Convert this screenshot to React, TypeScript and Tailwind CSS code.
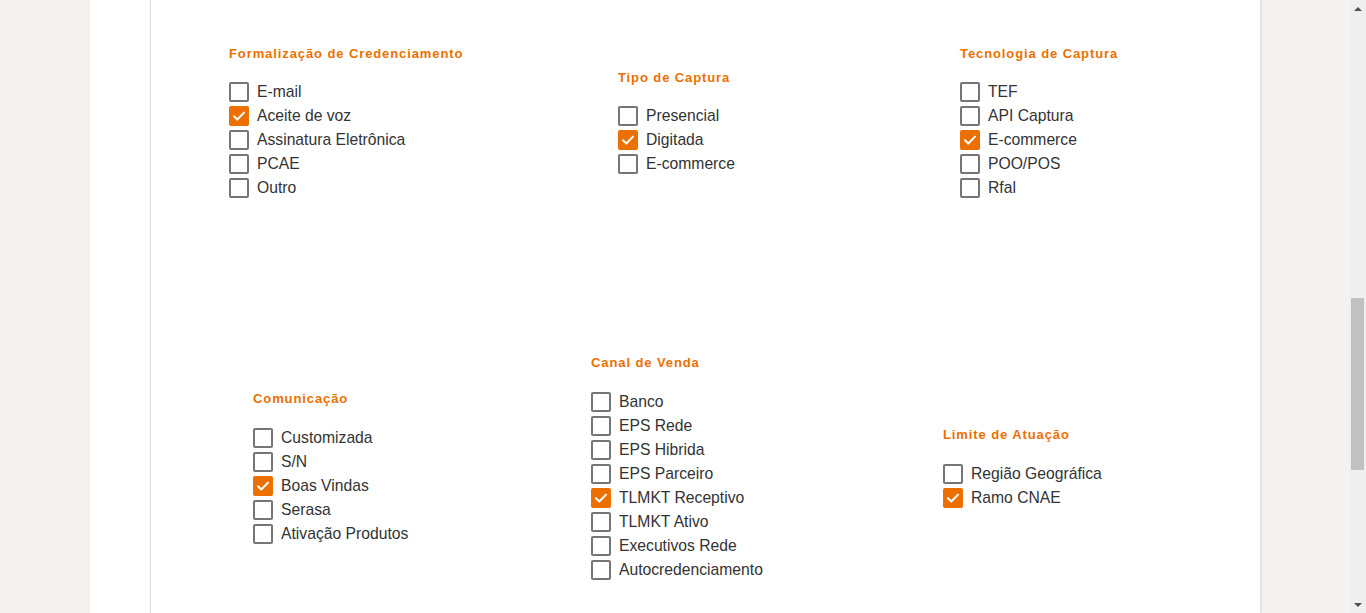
import React from 'react';

type Option = { label: string; checked?: boolean };

interface GroupProps {
  title: string;
  options: Option[];
  listClass?: string;
}

function Check({ checked }: { checked?: boolean }) {
  if (checked) {
    return (
      <span className="flex h-[20px] w-[20px] shrink-0 items-center justify-center rounded-[2px] bg-[#ec7000]">
        <svg width="14" height="14" viewBox="0 0 14 14" fill="none">
          <path d="M2 7.2l3.3 3.3L12 3.6" stroke="#fff" strokeWidth="2" strokeLinecap="round" strokeLinejoin="round" />
        </svg>
      </span>
    );
  }
  return <span className="h-[20px] w-[20px] shrink-0 rounded-[2px] border-2 border-[#767676] bg-white" />;
}

function CheckGroup({ title, options, listClass = 'mt-[18px]' }: GroupProps) {
  return (
    <div>
      <p className="text-[13px] font-bold leading-[16px] tracking-[0.9px] text-[#ec7000]">{title}</p>
      <ul className={listClass}>
        {options.map((opt) => (
          <li key={opt.label} className="flex h-[24px] items-center gap-[8px]">
            <Check checked={opt.checked} />
            <span className="text-[15.7px] leading-[24px] text-[#333]">{opt.label}</span>
          </li>
        ))}
      </ul>
    </div>
  );
}

const formalizacao: Option[] = [
  { label: 'E-mail' },
  { label: 'Aceite de voz', checked: true },
  { label: 'Assinatura Eletrônica' },
  { label: 'PCAE' },
  { label: 'Outro' },
];

const tipoCaptura: Option[] = [
  { label: 'Presencial' },
  { label: 'Digitada', checked: true },
  { label: 'E-commerce' },
];

const tecnologia: Option[] = [
  { label: 'TEF' },
  { label: 'API Captura' },
  { label: 'E-commerce', checked: true },
  { label: 'POO/POS' },
  { label: 'Rfal' },
];

const comunicacao: Option[] = [
  { label: 'Customizada' },
  { label: 'S/N' },
  { label: 'Boas Vindas', checked: true },
  { label: 'Serasa' },
  { label: 'Ativação Produtos' },
];

const canalVenda: Option[] = [
  { label: 'Banco' },
  { label: 'EPS Rede' },
  { label: 'EPS Hibrida' },
  { label: 'EPS Parceiro' },
  { label: 'TLMKT Receptivo', checked: true },
  { label: 'TLMKT Ativo' },
  { label: 'Executivos Rede' },
  { label: 'Autocredenciamento' },
];

const limite: Option[] = [
  { label: 'Região Geográfica' },
  { label: 'Ramo CNAE', checked: true },
];

export default function App() {
  return (
    <div className="flex h-[613px] w-full overflow-hidden bg-[#f5f2ef] font-['Liberation_Sans',Arial,sans-serif]">
      <div className="flex-1 pl-[90px] pr-[89px]">
        {/* painel branco */}
        <div className="h-full w-[1170px] bg-white pl-[60px] shadow-[1px_0_3px_rgba(0,0,0,0.12)]">
          <div className="h-full border-l border-[#dcdcdc] pt-[46px]">
            <div className="grid grid-cols-[389px_342px_1fr] items-center pl-[78px]">
              <CheckGroup title="Formalização de Credenciamento" options={formalizacao} />
              <CheckGroup title="Tipo de Captura" options={tipoCaptura} />
              <CheckGroup title="Tecnologia de Captura" options={tecnologia} />
            </div>
            <div className="mt-[155px] grid grid-cols-[338px_352px_1fr] items-center pl-[102px]">
              <CheckGroup title="Comunicação" options={comunicacao} listClass="mt-[19px]" />
              <CheckGroup title="Canal de Venda" options={canalVenda} listClass="mt-[19px]" />
              <CheckGroup title="Limite de Atuação" options={limite} listClass="mt-[19px]" />
            </div>
          </div>
        </div>
      </div>
      {/* barra de rolagem */}
      <div className="flex w-[17px] flex-col bg-[#efefef]">
        <div className="flex h-[17px] items-center justify-center">
          <span className="h-0 w-0 border-x-[4px] border-b-[4px] border-x-transparent border-b-[#505050]" />
        </div>
        <div className="mt-[281px] ml-[2px] h-[172px] w-[13px] bg-[#c1c1c1]" />
        <div className="flex-1" />
        <div className="flex h-[17px] items-center justify-center">
          <span className="h-0 w-0 border-x-[4px] border-t-[4px] border-x-transparent border-t-[#505050]" />
        </div>
      </div>
    </div>
  );
}
